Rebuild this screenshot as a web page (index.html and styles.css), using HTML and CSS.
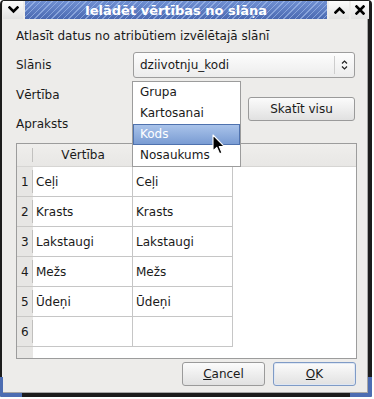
FILE: index.html
```html
<!DOCTYPE html>
<html lang="lv">
<head>
<meta charset="utf-8">
<title>Ielādēt vērtības no slāņa</title>
<link rel="stylesheet" href="styles.css">
</head>
<body>
<div class="window">
  <div class="titlebar">
    <div class="tb-btn">
      <svg width="11" height="8" viewBox="0 0 11 8"><polyline points="1.5,1.5 5.5,5.5 9.5,1.5" fill="none" stroke="#000" stroke-width="2.6" stroke-linecap="square"/></svg>
    </div>
    <div class="tb-title">Ielādēt vērtības no slāņa</div>
    <div class="tb-btn">
      <svg width="11" height="8" viewBox="0 0 11 8"><polyline points="1.5,6.5 5.5,2.5 9.5,6.5" fill="none" stroke="#000" stroke-width="2.6" stroke-linecap="square"/></svg>
    </div>
    <div class="tb-btn tb-close">
      <svg width="10" height="10" viewBox="0 0 10 10"><path d="M1.5 1.5 L8.5 8.5 M8.5 1.5 L1.5 8.5" fill="none" stroke="#000" stroke-width="2.6" stroke-linecap="square"/></svg>
    </div>
  </div>

  <div class="content">
    <p class="intro">Atlasīt datus no atribūtiem izvēlētajā slānī</p>

    <div class="form">
      <div class="label">Slānis</div>
      <div class="combo combo-wide">
        <span class="combo-text">dziivotnju_kodi</span>
        <span class="combo-arrow">
          <svg width="7" height="12" viewBox="0 0 7 12"><polyline points="1,4.5 3.5,2 6,4.5" fill="none" stroke="#222" stroke-width="1.2"/><polyline points="1,7.5 3.5,10 6,7.5" fill="none" stroke="#222" stroke-width="1.2"/></svg>
        </span>
      </div>

      <div class="label">Vērtība</div>
      <div class="combo combo-narrow"></div>
      <button class="btn btn-view">Skatīt visu</button>

      <div class="label">Apraksts</div>
      <div class="combo combo-narrow"></div>

      <ul class="popup">
        <li>Grupa</li>
        <li>Kartosanai</li>
        <li class="selected">Kods</li>
        <li>Nosaukums</li>
      </ul>

      <svg class="cursor" width="14" height="22" viewBox="0 0 14 22"><path d="M1 1 L1 17 L4.8 13.4 L7.6 19.8 L10 18.8 L7.3 12.6 L12.4 12.6 Z" fill="#000" stroke="#fff" stroke-width="1.1" stroke-linejoin="round"/></svg>
    </div>

    <div class="table">
      <div class="th corner"></div>
      <div class="th col">Vērtība</div>
      <div class="th col"></div>
      <div class="th rest"></div>

      <div class="rh">1</div><div class="td">Ceļi</div><div class="td">Ceļi</div><div class="blank"></div>
      <div class="rh">2</div><div class="td">Krasts</div><div class="td">Krasts</div><div class="blank"></div>
      <div class="rh">3</div><div class="td">Lakstaugi</div><div class="td">Lakstaugi</div><div class="blank"></div>
      <div class="rh">4</div><div class="td">Mežs</div><div class="td">Mežs</div><div class="blank"></div>
      <div class="rh">5</div><div class="td">Ūdeņi</div><div class="td">Ūdeņi</div><div class="blank"></div>
      <div class="rh">6</div><div class="td"></div><div class="td"></div><div class="blank"></div>

      <div class="filler-rh"></div><div class="filler"></div>
    </div>

    <div class="actions">
      <button class="btn btn-dlg"><u>C</u>ancel</button>
      <button class="btn btn-dlg btn-default"><u>O</u>K</button>
    </div>
  </div>

  <div class="grip grip-left"></div>
  <div class="grip grip-right"></div>
</div>
</body>
</html>
```

FILE: styles.css
```css
* { box-sizing: border-box; }

html, body {
  margin: 0;
  padding: 0;
  background: #ffffff;
}

body {
  font-family: "DejaVu Sans", "Noto Sans", sans-serif;
  font-size: 12px;
  color: #1a1a1a;
}

.window {
  position: relative;
  width: 372px;
  height: 397px;
  background: #edecea;
  border-style: solid;
  border-color: #1c1c1c;
  border-width: 1px 4px 4px 2px;
  border-radius: 4px 4px 2px 2px;
  box-shadow: inset -1px -1px 0 #a6a6a6;
}

/* ---------- title bar ---------- */
.titlebar {
  display: flex;
  height: 18px;
  gap: 2px;
  margin-right: -1px;
}

.tb-btn {
  width: 20px;
  display: flex;
  align-items: center;
  justify-content: center;
  background: linear-gradient(#fbfbfb, #e2e2e2);
}

.tb-btn:first-child {
  margin-left: 1px;
}

.tb-close {
  width: 18px;
}

.tb-title {
  flex: 1;
  display: flex;
  align-items: center;
  justify-content: center;
  color: #ffffff;
  font-weight: bold;
  font-size: 13px;
  background:
    repeating-linear-gradient(135deg, rgba(255,255,255,0) 0 3px, rgba(170,195,240,0.6) 3px 4px),
    linear-gradient(#7090d2, #4a69b1);
}

/* ---------- content ---------- */
.content {
  padding: 9px 11px 0 14px;
}

.intro {
  margin: 0 0 8px;
  line-height: 16px;
}

.form {
  position: relative;
  z-index: 2;
  display: grid;
  grid-template-columns: 117px 107px 8px 107px;
  grid-template-rows: 26px 24px 24px;
  row-gap: 5px;
  align-items: center;
}

.label {
  grid-column: 1;
}

.combo {
  height: 100%;
  border: 1px solid #9d9d9d;
  border-radius: 3px;
  background: linear-gradient(#fdfdfd, #ececec);
  display: flex;
  align-items: center;
}

.combo-wide {
  grid-column: 2 / 5;
}

.combo-narrow {
  grid-column: 2;
}

.combo-text {
  flex: 1;
  padding-left: 6px;
}

.combo-arrow {
  width: 20px;
  height: 18px;
  display: flex;
  align-items: center;
  justify-content: center;
  border-left: 1px solid #cdcdcd;
}

.btn {
  font-family: inherit;
  font-size: 12px;
  color: #1a1a1a;
  border: 1px solid #9a9a9a;
  border-radius: 3px;
  background: linear-gradient(#fbfbfb, #e1e1e1);
  padding: 0;
  margin: 0;
  height: 24px;
}

.btn-view {
  grid-column: 4;
  grid-row: 2 / 4;
  align-self: center;
  margin-top: -1px;
}

.popup {
  position: absolute;
  z-index: 5;
  left: 116px;
  top: 29px;
  width: 109px;
  height: 86px;
  margin: 0;
  padding: 0;
  list-style: none;
  background: #ffffff;
  border: 1px solid #9c9c9c;
}

.popup li {
  height: 21px;
  line-height: 20px;
  padding-left: 7px;
}

.popup li.selected {
  color: #ffffff;
  background: linear-gradient(#a9c3ea, #7a9cd3);
  border: 1px solid #4f72ae;
  padding-left: 6px;
  line-height: 19px;
}

.cursor {
  position: absolute;
  z-index: 6;
  left: 196px;
  top: 82px;
}

/* ---------- table ---------- */
.table {
  position: relative;
  z-index: 1;
  margin-top: 7px;
  height: 216px;
  border: 1px solid #9c9c9c;
  background: #ffffff;
  display: grid;
  grid-template-columns: 16px 100px 100px 1fr;
  grid-template-rows: 23px repeat(6, 30px) 1fr;
}

.th {
  position: relative;
  background: linear-gradient(#efeeec, #e8e7e5);
  border-bottom: 1px solid #d6d5d3;
  display: flex;
  align-items: center;
  justify-content: center;
}

.corner::after,
.col::after {
  content: "";
  position: absolute;
  right: 0;
  top: 4px;
  bottom: 4px;
  width: 1px;
  background: #c2c1bf;
  box-shadow: 1px 0 0 #fafafa;
}

.rh {
  position: relative;
  background: #e7e6e4;
  border-bottom: 1px solid #c9c8c6;
  display: flex;
  align-items: center;
  padding-left: 4px;
}

.rh::after {
  content: "";
  position: absolute;
  right: 0;
  top: 3px;
  bottom: 3px;
  width: 1px;
  background: #c0bfbd;
}

.td {
  border-right: 1px solid #c6c6c6;
  border-bottom: 1px solid #c6c6c6;
  display: flex;
  align-items: center;
  padding-left: 3px;
}

.filler-rh {
  background: #e7e6e4;
}

.filler {
  grid-column: 2 / 5;
}

/* ---------- dialog buttons ---------- */
.actions {
  display: flex;
  justify-content: flex-end;
  gap: 8px;
  margin-top: 3px;
  padding-right: 1px;
}

.btn-dlg {
  width: 83px;
}

.btn-default {
  border-color: #7f9bc6;
  box-shadow: inset 0 0 0 1px #dfe7f3;
}

/* ---------- resize grips ---------- */
.grip {
  position: absolute;
  bottom: -4px;
  width: 22px;
  height: 20px;
  border-color: #4d6db2;
  border-style: solid;
}

.grip-left {
  left: -2px;
  border-width: 0 0 4px 3px;
  border-bottom-left-radius: 2px;
}

.grip-right {
  right: -4px;
  border-width: 0 4px 4px 0;
  border-bottom-right-radius: 2px;
}
```
